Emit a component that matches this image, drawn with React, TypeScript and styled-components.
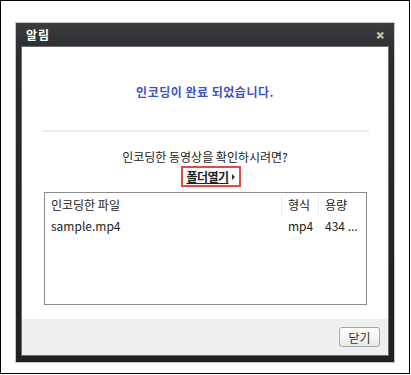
import styled, { createGlobalStyle } from "styled-components";

const GlobalStyle = createGlobalStyle`
    html, body {
        margin: 0;
        padding: 0;
        background: #fff;
    }
    body {
        font-family: "Noto Sans CJK KR", "Noto Sans", sans-serif;
        font-size: 12px;
        color: #222;
    }
`;

const files = [
    { name: "sample.mp4", type: "mp4", size: "434 ..." },
];

const App = () => {
    return (
        <>
            <GlobalStyle />
            <Page>
                <Dialog>
                    <TitleBar>
                        <h1>알림</h1>
                        <CloseButton>✕</CloseButton>
                    </TitleBar>
                    <Panel>
                        <Message>인코딩이 완료 되었습니다.</Message>
                        <Divider />
                        <Question>인코딩한 동영상을 확인하시려면?</Question>
                        <FolderLink>
                            <span>폴더열기</span>
                            <Arrow />
                        </FolderLink>
                        <FileList>
                            <ListRow header>
                                <Cell>인코딩한 파일</Cell>
                                <Cell>형식</Cell>
                                <Cell>용량</Cell>
                            </ListRow>
                            {files.map((f) => (
                                <ListRow key={f.name}>
                                    <Cell>{f.name}</Cell>
                                    <Cell>{f.type}</Cell>
                                    <Cell>{f.size}</Cell>
                                </ListRow>
                            ))}
                        </FileList>
                        <Footer>
                            <Button>닫기</Button>
                        </Footer>
                    </Panel>
                </Dialog>
            </Page>
        </>
    );
};

const Page = styled.div`
    box-sizing: border-box;
    width: 410px;
    height: 374px;
    border: 1px solid #000;
    padding: 21px 0 0 14px;
`;

const Dialog = styled.div`
    box-sizing: border-box;
    width: 380px;
    height: 341px;
    border: 1px solid #c4c4c4;
    background: linear-gradient(180deg, #3a3b3e 0%, #2a2b2e 10%, #1f2023 100%);
    padding: 0 5px 6px 5px;
    display: flex;
    flex-direction: column;
`;

const TitleBar = styled.div`
    height: 23px;
    display: flex;
    align-items: center;
    justify-content: space-between;
    padding: 0 5px 0 5px;
    >h1 {
        margin: 0;
        font-size: 12px;
        font-weight: bold;
        color: #fff;
        letter-spacing: 1px;
    }
`;

const CloseButton = styled.span`
    color: #bdbdbd;
    font-size: 10px;
    font-weight: bold;
    line-height: 1;
    -webkit-text-stroke: 0.6px #bdbdbd;
`;

const Panel = styled.div`
    flex: 1;
    border: 1px solid #6e6e6e;
    background: #fff;
    display: flex;
    flex-direction: column;
    align-items: center;
`;

const Message = styled.div`
    margin-top: 37px;
    line-height: 16px;
    font-size: 12px;
    font-weight: bold;
    color: #3d50cc;
    letter-spacing: 0.5px;
`;

const Divider = styled.div`
    align-self: stretch;
    margin: 30px 19px 0 20px;
    height: 2px;
    background: #ececec;
`;

const Question = styled.div`
    margin-top: 17px;
    line-height: 16px;
    color: #222;
`;

const FolderLink = styled.div`
    margin-top: 1px;
    margin-left: 12px;
    box-sizing: border-box;
    height: 21px;
    padding: 0 4px 0 3px;
    border: 2px solid #e24a44;
    display: flex;
    align-items: center;
    gap: 3px;
    >span {
        font-weight: bold;
        text-decoration: underline;
        color: #222;
        letter-spacing: -0.5px;
    }
`;

const Arrow = styled.i`
    width: 0;
    height: 0;
    border-top: 3px solid transparent;
    border-bottom: 3px solid transparent;
    border-left: 3px solid #333;
`;

const FileList = styled.div`
    box-sizing: border-box;
    align-self: stretch;
    margin: 5px 21px 0 22px;
    height: 113px;
    border: 1px solid #8a8a8a;
    padding-top: 1px;
`;

const ListRow = styled.div<{ header?: boolean }>`
    display: grid;
    grid-template-columns: 236px 37px 1fr;
    height: 21px;
    align-items: center;
    >div + div {
        border-left: 1px solid ${(p) => (p.header ? "#ececec" : "transparent")};
    }
`;

const Cell = styled.div`
    height: 100%;
    display: flex;
    align-items: center;
    padding-left: 6px;
    white-space: nowrap;
    overflow: hidden;
    color: #222;
`;

const Footer = styled.div`
    margin-top: auto;
    align-self: stretch;
    height: 36px;
    background: #efefef;
    display: flex;
    justify-content: flex-end;
    align-items: center;
    padding-right: 8px;
`;

const Button = styled.button`
    width: 41px;
    height: 20px;
    padding: 0;
    font-family: inherit;
    font-size: 12px;
    color: #333;
    border: 1px solid #a8a8a8;
    border-radius: 3px;
    background: linear-gradient(180deg, #ffffff 0%, #f4f4f4 60%, #e6e6e6 100%);
`;

export default App;
